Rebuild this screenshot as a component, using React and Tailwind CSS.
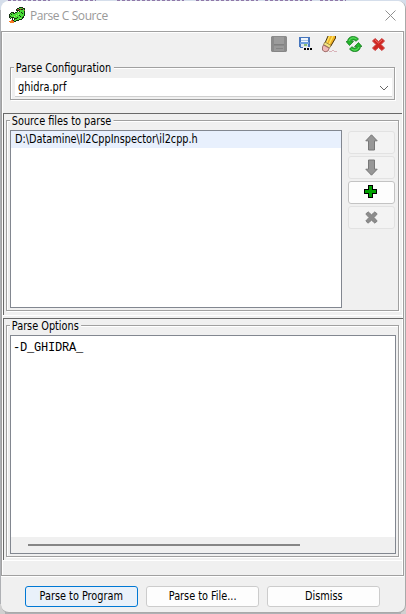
import React from "react";

const ui = "font-['DejaVu_Sans_Condensed','DejaVu_Sans',sans-serif] [font-stretch:condensed]";

const dragonRows = [
  "..........kkkk..",
  "........kkgggbkk",
  ".......kbbkrkkgk",
  ".......kkkbggggb",
  "........kwkggggk",
  "..kkk.kkggggkggk",
  ".kggkkgggggggkgk",
  "kgkgggggglgggggk",
  "kgggggglggkggggk",
  "kkggglgggggkggk.",
  "kgkkkgggkggggkk.",
  ".kwkwkkkggglgk..",
  "...k.kggggkkk...",
  "..orkggkkk......",
  "oooookk.........",
  ".oooo...........",
];
const dragonColors = {
  k: "#12300f",
  g: "#4bdc38",
  l: "#9af26c",
  b: "#a5603a",
  r: "#c3271a",
  o: "#f47b20",
  w: "#f4f7e8",
};

function Dragon() {
  return (
    <svg width="16" height="16" viewBox="0 0 16 16" shapeRendering="crispEdges">
      {dragonRows.flatMap((row, y) =>
        [...row].map((c, x) =>
          c === "." ? null : <rect key={`${x}-${y}`} x={x} y={y} width="1" height="1" fill={dragonColors[c]} />
        )
      )}
    </svg>
  );
}

function SaveIcon() {
  return (
    <svg width="16" height="16" viewBox="0 0 16 16">
      <path d="M1 0h14l1 1v14l-1 1H1l-1-1V1z" fill="#8b8b8b" />
      <rect x="3" y="1" width="10" height="7" fill="#9c9c9c" />
      <path d="M3 8.500h10" stroke="#808080" />
      <rect x="3" y="10" width="10" height="5" fill="#999" />
      <path d="M5 12.500h7M3 15.500h10" stroke="#858585" />
    </svg>
  );
}

function SaveAsIcon() {
  return (
    <svg width="14" height="14" viewBox="0 0 14 14" shapeRendering="crispEdges">
      <path d="M0 0h11v11H1l-1-1z" fill="#4776bd" />
      <path d="M2 1h7v4H2z" fill="#eff5fb" />
      <path d="M2 3h7v1H2z" fill="#a6c3e2" />
      <path d="M1 5h9v2H1z" fill="#6fa0dc" />
      <path d="M2 7h7v3H2z" fill="#dce5ef" />
      <path d="M5 7h3v2H5z" fill="#8bbf70" />
      <path d="M4 10h10v4H4z" fill="#efefef" />
      <path d="M5 11h2v2H5zM8 11h2v2H8zM11 11h2v2h-2z" fill="#000" />
    </svg>
  );
}

function EraserIcon() {
  return (
    <svg width="16" height="17" viewBox="0 0 16 17">
      <path d="M6 0h8v2L8.500 11 3.500 8z" fill="#efb026" />
      <path d="M7.500 0L4 8M11 0L6.500 9" stroke="#ffe35c" strokeWidth="1.500" />
      <path d="M13.500 0v2L8.500 10.500M6 0L3 7" fill="none" stroke="#4a3818" />
      <path d="M3 6l6 3.500L7.500 12 1.500 8.500z" fill="#f5e584" stroke="#806b38" strokeWidth=".7" />
      <path d="M1.500 9l5.700 3.200L6 15l-3 .8L.5 14.200V11z" fill="#efb9b8" stroke="#8d5552" strokeWidth=".8" />
      <path d="M7 15.500h3M10 14.500h2M12 15.500h3" stroke="#d9b3b9" />
    </svg>
  );
}

function RefreshIcon() {
  return (
    <svg width="16" height="16" viewBox="0 0 16 16">
      <path d="M1.500 5.500H0l3.500 4L7.500 5.500H5.500c.5-2 3-2 4.500-.2L12.500 3C9.500-1 2-.5 1.500 5.500z" fill="#23b52b" stroke="#087412" strokeWidth=".7" />
      <path d="M14.500 10.500H16l-3.500-4-4 4h2c-.5 2-3 2-4.500.2L3.500 13c3 4 10.500 3.500 11-2.500z" fill="#23b52b" stroke="#087412" strokeWidth=".7" />
      <path d="M3 5C4 1.800 7.500 1 10.500 3M13 11c-1 3.200-4.500 4-7.500 2" fill="none" stroke="#78e578" strokeWidth=".9" />
    </svg>
  );
}

function DeleteIcon() {
  return (
    <svg width="13" height="13" viewBox="0 0 13 13">
      <path d="M3 .5l3.500 3 3.500-3L12.500 3 9 6.500l3.500 3.500-2.500 2.500-3.500-3-3.500 3L.5 10 4 6.500.5 3z" fill="#cf2722" stroke="#c44" />
      <path d="M3 2l3.500 3L10 2" fill="none" stroke="#ef6a62" />
    </svg>
  );
}

function Arrow({ down = false }) {
  return (
    <svg className={`mr-px mb-px ${down ? "rotate-180" : ""}`} width="13" height="17" viewBox="0 0 13 17">
      <path d="M6.500 .8l5.700 6H9.500v9.200h-6V6.800H.8z" fill="#979797" stroke="#777" />
    </svg>
  );
}

function Plus() {
  return (
    <svg className="mr-[2px] mb-[2px]" width="13" height="13" viewBox="0 0 13 13" shapeRendering="crispEdges">
      <path d="M4 0h5v4h4v5H9v4H4V9H0V4h4z" fill="#000" />
      <path d="M5 1h3v4h4v3H8v4H5V8H1V5h4z" fill="#00a000" />
    </svg>
  );
}

function Cross() {
  return (
    <svg className="mr-px mb-px" width="13" height="13" viewBox="0 0 13 13">
      <path d="M3 .8l3.500 3 3.500-3L12.200 3 9 6.500l3.200 3.500-2.200 2.200-3.500-3-3.500 3L.8 10 4 6.500.8 3z" fill="#8c8c8c" stroke="#808080" />
    </svg>
  );
}

function Group({ title, className, children }) {
  return (
    <fieldset className={`relative flex min-w-0 border border-[#a0a0a0] shadow-[1px_1px_0_#fff,inset_1px_1px_0_#fff] ${className}`}>
      <span className="absolute -top-[6px] left-[3px] h-[13px] origin-left scale-x-[0.9] whitespace-nowrap bg-[#f0f0f0] pr-[3px] pl-[2px] leading-[13px]">{title}</span>
      {children}
    </fieldset>
  );
}

function SideButton({ active = false, children }) {
  return (
    <button className={`flex h-[23px] w-[47px] items-center justify-center rounded-[3px] border ${active ? "border-[#c3c3c3] bg-[#fdfdfd]" : "border-[#e2e2e2] bg-[#f3f3f3]"}`}>
      {children}
    </button>
  );
}

function FooterButton({ primary = false, children }) {
  return (
    <button className={`flex h-[21px] w-[113px] items-center justify-center rounded-[3px] border ${primary ? "border-[#0078d4] bg-[#e9f1fa]" : "border-[#cccccc] bg-[#fdfdfd]"}`}>
      <span className="scale-x-[0.9] whitespace-nowrap leading-[15px]">{children}</span>
    </button>
  );
}

function Backdrop() {
  return (
    <svg className="absolute inset-0" width="406" height="614" shapeRendering="crispEdges">
      <rect width="406" height="614" fill="#aeb0b4" />
      <rect width="406" height="10" fill="#d5deeb" />
      <path d="M8 .5h42M70 .5h26M117 .5h67M196 .5h62M265 .5h47M320 .5h26" stroke="#9078a8" strokeDasharray="3 2" />
      <path d="M0 604h5v10H0zM401 604h5v10h-5z" fill="#d0d0d0" />
    </svg>
  );
}

export default function App() {
  return (
    <div className={`relative h-[614px] w-[406px] overflow-hidden text-[12px] text-black ${ui}`}>
      <Backdrop />
      <div className="relative flex h-full flex-col pt-px pb-px pl-px">
        <div className="flex h-full flex-col overflow-hidden rounded-[8px] border-r border-b border-[#a9a9a9] bg-[#f0f0f0]">
          <header className="flex h-[30px] shrink-0 items-center bg-white pr-[9px] pl-[8px]">
            <div className="mb-[2px]"><Dragon /></div>
            <h1 className="ml-[5px] flex-1 font-['Open_Sans','Noto_Sans',sans-serif] text-[12px] leading-[16px] tracking-[-0.42px] text-[#999] [font-stretch:normal]">Parse C Source</h1>
            <svg className="mb-[2px]" width="11" height="11" viewBox="0 0 11 11"><path d="M.5.5l10 10M10.500.5l-10 10" stroke="#909090" /></svg>
          </header>

          <main className="flex h-[545px] w-[403px] shrink-0 flex-col border border-[#a0a0a0] shadow-[0_1px_0_#fff,inset_1px_1px_0_#fff,inset_-1px_0_0_#fff]">
            <div className="flex h-[35px] shrink-0 items-start pt-[4px] pl-[269px]">
              <div className="w-[28px]"><SaveIcon /></div>
              <div className="w-[23px] pt-px"><SaveAsIcon /></div>
              <div className="w-[24px]"><EraserIcon /></div>
              <div className="w-[26px]"><RefreshIcon /></div>
              <div className="pt-[2px]"><DeleteIcon /></div>
            </div>
            <Group title="Parse Configuration" className="mr-[8px] ml-[8px] h-[33px] w-[385px] shrink-0 items-start pt-[10px] pl-[4px]">
              <div className="flex h-[19px] w-[377px] items-center justify-between border-b border-[#cfcfcf] bg-white pr-[3px] pl-[3px]">
                <span className="origin-left scale-x-[0.91] leading-[16px]">ghidra.prf</span>
                <svg className="mt-px" width="10" height="6" viewBox="0 0 10 6"><path d="M1 1l4 4 4-4" fill="none" stroke="#666" strokeWidth="1" /></svg>
              </div>
            </Group>

            <section className="mt-[13px] ml-px h-[202px] w-[399px] shrink-0 border-t border-l border-[#696969] pt-[6px] pl-[2px]">
              <Group title="Source files to parse" className="h-[191px] w-[393px] items-start pt-[9px] pl-[3px]">
                <div className="h-[178px] w-[332px] shrink-0 border border-[#828790] bg-white">
                  <div className="h-[17px] bg-[#e8f0fd] pl-[4px]">
                    <span className="block w-max origin-left scale-x-[0.9] leading-[17px]">D:\Datamine\Il2CppInspector\il2cpp.h</span>
                  </div>
                </div>
                <div className="ml-[6px] flex flex-col gap-[2px] pt-px">
                  <SideButton><Arrow /></SideButton>
                  <SideButton><Arrow down /></SideButton>
                  <SideButton active><Plus /></SideButton>
                  <SideButton><Cross /></SideButton>
                </div>
              </Group>
            </section>
            <div className="ml-px h-[3px] shrink-0 border-t border-white" />

            <section className="ml-px h-[242px] w-[400px] shrink-0 border-t border-l border-[#696969] pt-[6px] pl-[2px] shadow-[0_1px_0_#fff]">
              <Group title="Parse Options" className="h-[232px] w-[393px] items-start pt-[9px] pl-[3px]">
                <div className="flex h-[219px] w-[386px] shrink-0 flex-col border border-[#828790] bg-white">
                  <pre className="flex-1 pt-[4px] pl-[2px] font-['Liberation_Mono',monospace] text-[12px] leading-[16px] tracking-[-0.2px]">-D_GHIDRA_</pre>
                  <div className="h-[16px] bg-[#f0f0f0] pt-[7px] pl-[17px]">
                    <div className="h-[2px] w-[272px] bg-[#868686]" />
                  </div>
                </div>
              </Group>
            </section>
          </main>

          <footer className="flex gap-[8px] pt-[10px] pl-[24px]">
            <FooterButton primary>Parse to Program</FooterButton>
            <FooterButton>Parse to File...</FooterButton>
            <FooterButton>Dismiss</FooterButton>
          </footer>
        </div>
      </div>
    </div>
  );
}
